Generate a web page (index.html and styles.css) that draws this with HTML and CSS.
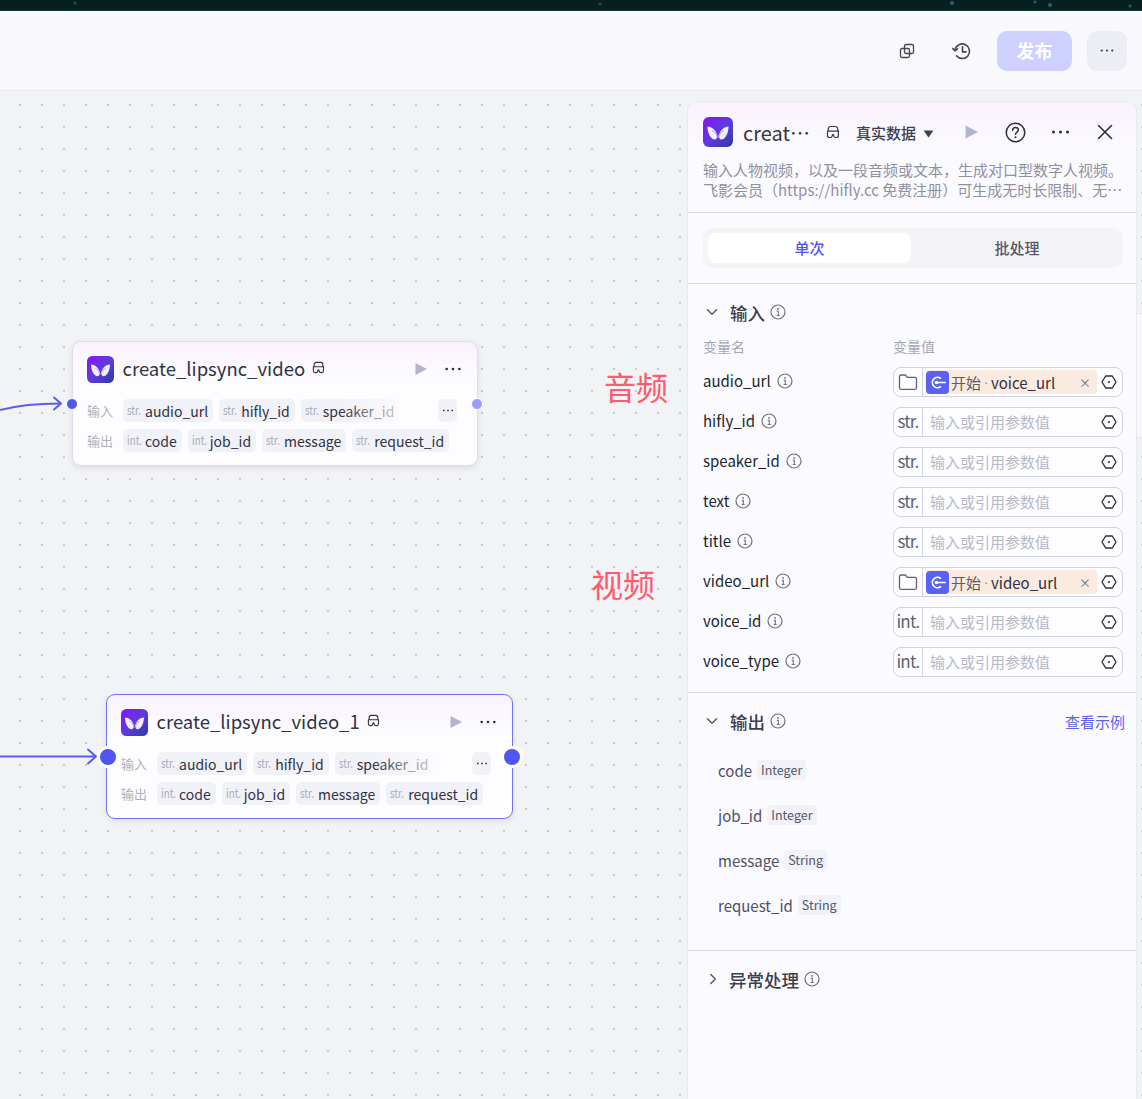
FILE: index.html
```html
<!DOCTYPE html>
<html lang="zh">
<head>
<meta charset="utf-8">
<title>create_lipsync_video</title>
<link rel="stylesheet" href="styles.css">
</head>
<body>
<svg class="defs" width="0" height="0" aria-hidden="true">
  <defs>
    <linearGradient id="logo-bg" x1="0" y1="0" x2="1" y2="1">
      <stop offset="0" stop-color="#8a14f2"/><stop offset=".5" stop-color="#5f3adf"/><stop offset="1" stop-color="#2a3ca4"/>
    </linearGradient>
    <symbol id="logo" viewBox="0 0 30 30">
      <rect width="30" height="30" rx="6" fill="url(#logo-bg)"/>
      <path d="M4.500 9.500c4.500.2 8 3 10 9.500-1 2.500-1.500 3.500-2.500 3.500-4.500 0-7.500-6.500-7.500-13z" fill="#fff" opacity=".92"/>
      <path d="M25.500 9.500c-4.500.2-8 3-10 9.500 1 2.500 1.500 3.500 2.500 3.500 4.500 0 7.500-6.500 7.500-13z" fill="#fff" opacity=".92"/>
      <path d="M9 13.500c2.500 1 4.500 3.500 5.500 7M21 13.500c-2.500 1-4.500 3.500-5.500 7" fill="none" stroke="#b79cf5" stroke-width="1"/>
    </symbol>
    <symbol id="mask" viewBox="0 0 14 14">
      <path d="M2.300 6V3.800C2.300 2.300 3.300 1.500 4.600 1.500h4.800c1.300 0 2.300.8 2.300 2.300V6M1 6.200h12M1.500 6.200v4.300c0 1.200.9 2 2 2h.8c1 0 1.700-.8 1.900-1.700l.3-1.300h.9l.3 1.300c.2.900.9 1.700 1.900 1.700h.8c1.100 0 2-.8 2-2V6.200" fill="none" stroke="currentColor" stroke-width="1.200" stroke-linejoin="round"/>
    </symbol>
    <symbol id="info" viewBox="0 0 16 16">
      <circle cx="8" cy="8" r="7" fill="none" stroke="currentColor" stroke-width="1.200"/>
      <path d="M6.700 7.200H8.300V11.500M6.700 11.500H9.700" fill="none" stroke="currentColor" stroke-width="1.100"/>
      <circle cx="8" cy="4.900" r=".9" fill="currentColor"/>
    </symbol>
    <symbol id="hex" viewBox="0 0 16 16">
      <path d="M4.700 2h6.600L15 8l-3.700 6H4.700L1 8z" fill="none" stroke="currentColor" stroke-width="1.400" stroke-linejoin="round"/>
      <circle cx="8" cy="8" r="1.100" fill="currentColor"/>
    </symbol>
    <symbol id="folder" viewBox="0 0 20 18">
      <path d="M1.500 3.500c0-.8.6-1.500 1.500-1.500h4.300l2 2.300H17c.8 0 1.500.7 1.500 1.500v9c0 .8-.7 1.500-1.500 1.500H3c-.9 0-1.500-.7-1.500-1.500z" fill="none" stroke="#5f6273" stroke-width="1.300" stroke-linejoin="round"/>
    </symbol>
    <symbol id="start" viewBox="0 0 23 23">
      <rect width="23" height="23" rx="4" fill="#5a62f6"/>
      <path d="M14.500 7.200a5.200 5.200 0 1 0 0 8.600" fill="none" stroke="#fff" stroke-width="1.700" stroke-linecap="round"/>
      <path d="M9.500 11.500H19" fill="none" stroke="#fff" stroke-width="1.700" stroke-linecap="round"/>
      <circle cx="10.500" cy="11.500" r="1.800" fill="#fff"/>
    </symbol>
    <symbol id="play" viewBox="0 0 14 14"><path d="M1.500 1v12L13 7z" fill="currentColor"/></symbol>
    <symbol id="dots" viewBox="0 0 20 4"><circle cx="3" cy="2" r="1.500" fill="currentColor"/><circle cx="10" cy="2" r="1.500" fill="currentColor"/><circle cx="17" cy="2" r="1.500" fill="currentColor"/></symbol>
    <symbol id="chev" viewBox="0 0 12 12"><path d="M1.500 3.800L6 8.300l4.500-4.500" fill="none" stroke="currentColor" stroke-width="1.500" stroke-linecap="round" stroke-linejoin="round"/></symbol>
  </defs>
</svg>

<div class="app">
  <div class="strip"></div>
  <header class="topbar">
    <svg class="tool-icon" viewBox="0 0 16 16" width="16" height="16"><rect x="5.500" y="1.500" width="9" height="9" rx="1.500" fill="none" stroke="currentColor" stroke-width="1.300"/><rect x="1.500" y="5.500" width="9" height="9" rx="1.500" fill="none" stroke="currentColor" stroke-width="1.300"/></svg>
    <svg class="tool-icon" viewBox="0 0 20 20" width="20" height="20"><path d="M3.200 8.200A7.300 7.300 0 1 1 4.500 14.800" fill="none" stroke="currentColor" stroke-width="1.600" stroke-linecap="round"/><path d="M.8 7.600l2.300 2.300 2.500-2.200" fill="none" stroke="currentColor" stroke-width="1.500" stroke-linecap="round" stroke-linejoin="round"/><path d="M10.500 5.800V10.800H14" fill="none" stroke="currentColor" stroke-width="1.700" stroke-linecap="round" stroke-linejoin="round"/></svg>
    <button class="publish">发布</button>
    <button class="more-btn"><svg viewBox="0 0 20 4" width="16" height="3"><use href="#dots"/></svg></button>
  </header>

  <main class="canvas">
    <svg class="edges" width="110" height="1008">
      <path d="M0 319C20 314 40 312.500 60 312.500" fill="none" stroke="#5a5ef0" stroke-width="2"/>
      <path d="M54 306.500l7 6-7 6" fill="none" stroke="#5a5ef0" stroke-width="2" stroke-linecap="round" stroke-linejoin="round"/>
      <path d="M0 665.500H95" fill="none" stroke="#5a5ef0" stroke-width="2"/>
      <path d="M88 658.500l8 7-8 7" fill="none" stroke="#5a5ef0" stroke-width="2" stroke-linecap="round" stroke-linejoin="round"/>
    </svg>

    <div class="note note-audio">音频</div>
    <div class="note note-video">视频</div>

    <article class="node node-first">
      <span class="port port-in"></span><span class="port port-out"></span>
      <div class="node-head">
        <svg class="node-logo"><use href="#logo"/></svg>
        <span class="node-title">create_lipsync_video</span>
        <svg class="node-mask"><use href="#mask"/></svg>
        <svg class="node-play"><use href="#play"/></svg>
        <svg class="node-dots"><use href="#dots"/></svg>
      </div>
      <div class="node-row">
        <span class="row-label">输入</span>
        <div class="pills pills-input">
          <span class="pill"><i>str.</i>audio_url</span>
          <span class="pill"><i>str.</i>hifly_id</span>
          <span class="pill"><i>str.</i>speaker_id</span>
          <span class="fade"></span>
        </div>
        <span class="pill-more"><svg viewBox="0 0 20 4" width="12" height="3"><use href="#dots"/></svg></span>
      </div>
      <div class="node-row">
        <span class="row-label">输出</span>
        <div class="pills">
          <span class="pill"><i>int.</i>code</span>
          <span class="pill"><i>int.</i>job_id</span>
          <span class="pill"><i>str.</i>message</span>
          <span class="pill"><i>str.</i>request_id</span>
        </div>
      </div>
    </article>

    <article class="node node-second">
      <span class="port port-in"></span><span class="port port-out"></span>
      <div class="node-head">
        <svg class="node-logo"><use href="#logo"/></svg>
        <span class="node-title">create_lipsync_video_1</span>
        <svg class="node-mask"><use href="#mask"/></svg>
        <svg class="node-play"><use href="#play"/></svg>
        <svg class="node-dots"><use href="#dots"/></svg>
      </div>
      <div class="node-row">
        <span class="row-label">输入</span>
        <div class="pills pills-input">
          <span class="pill"><i>str.</i>audio_url</span>
          <span class="pill"><i>str.</i>hifly_id</span>
          <span class="pill"><i>str.</i>speaker_id</span>
          <span class="fade"></span>
        </div>
        <span class="pill-more"><svg viewBox="0 0 20 4" width="12" height="3"><use href="#dots"/></svg></span>
      </div>
      <div class="node-row">
        <span class="row-label">输出</span>
        <div class="pills">
          <span class="pill"><i>int.</i>code</span>
          <span class="pill"><i>int.</i>job_id</span>
          <span class="pill"><i>str.</i>message</span>
          <span class="pill"><i>str.</i>request_id</span>
        </div>
      </div>
    </article>

    <div class="behind-panel"></div>

    <aside class="panel">
      <section class="panel-head">
        <div class="head-row">
          <svg class="panel-logo"><use href="#logo"/></svg>
          <span class="panel-title">creat⋯</span>
          <svg class="panel-mask"><use href="#mask"/></svg>
          <span class="data-select">真实数据<svg class="caret" viewBox="0 0 12 9" width="11" height="8"><path d="M0.500 0.500h11L6 8.500z" fill="currentColor"/></svg></span>
          <svg class="panel-play"><use href="#play"/></svg>
          <svg class="panel-help" viewBox="0 0 22 22"><circle cx="11" cy="11" r="9.700" fill="none" stroke="currentColor" stroke-width="1.600"/><path d="M8 8.600c0-1.800 1.300-2.900 3-2.900s3 1.100 3 2.600c0 2.200-3 2.300-3 4.600" fill="none" stroke="currentColor" stroke-width="1.600" stroke-linecap="round"/><circle cx="11" cy="16" r="1.100" fill="currentColor"/></svg>
          <svg class="panel-dots"><use href="#dots"/></svg>
          <svg class="panel-close" viewBox="0 0 16 16"><path d="M1.500 1.500l13 13M14.500 1.500l-13 13" fill="none" stroke="currentColor" stroke-width="1.600" stroke-linecap="round"/></svg>
        </div>
        <p class="desc">输入人物视频，以及一段音频或文本，生成对口型数字人视频。<br>飞影会员（https://hifly.cc 免费注册）可生成无时长限制、无⋯</p>
      </section>

      <section class="tabs-wrap">
        <div class="tabs">
          <span class="tab tab-active">单次</span>
          <span class="tab">批处理</span>
        </div>
      </section>

      <section class="sec sec-input">
        <div class="sec-title">
          <svg class="chev"><use href="#chev"/></svg><span>输入</span><svg class="info"><use href="#info"/></svg>
        </div>
        <div class="col-head"><span>变量名</span><span>变量值</span></div>

        <div class="var-row">
          <div class="var-name">audio_url<svg class="info"><use href="#info"/></svg></div>
          <div class="field">
            <span class="field-type"><svg class="folder"><use href="#folder"/></svg></span>
            <span class="ref"><svg class="start"><use href="#start"/></svg><em>开始</em><b>·</b><span>voice_url</span><span class="ref-x">×</span></span>
            <svg class="hex"><use href="#hex"/></svg>
          </div>
        </div>
        <div class="var-row">
          <div class="var-name">hifly_id<svg class="info"><use href="#info"/></svg></div>
          <div class="field"><span class="field-type">str.</span><span class="ph">输入或引用参数值</span><svg class="hex"><use href="#hex"/></svg></div>
        </div>
        <div class="var-row">
          <div class="var-name">speaker_id<svg class="info"><use href="#info"/></svg></div>
          <div class="field"><span class="field-type">str.</span><span class="ph">输入或引用参数值</span><svg class="hex"><use href="#hex"/></svg></div>
        </div>
        <div class="var-row">
          <div class="var-name">text<svg class="info"><use href="#info"/></svg></div>
          <div class="field"><span class="field-type">str.</span><span class="ph">输入或引用参数值</span><svg class="hex"><use href="#hex"/></svg></div>
        </div>
        <div class="var-row">
          <div class="var-name">title<svg class="info"><use href="#info"/></svg></div>
          <div class="field"><span class="field-type">str.</span><span class="ph">输入或引用参数值</span><svg class="hex"><use href="#hex"/></svg></div>
        </div>
        <div class="var-row">
          <div class="var-name">video_url<svg class="info"><use href="#info"/></svg></div>
          <div class="field">
            <span class="field-type"><svg class="folder"><use href="#folder"/></svg></span>
            <span class="ref"><svg class="start"><use href="#start"/></svg><em>开始</em><b>·</b><span>video_url</span><span class="ref-x">×</span></span>
            <svg class="hex"><use href="#hex"/></svg>
          </div>
        </div>
        <div class="var-row">
          <div class="var-name">voice_id<svg class="info"><use href="#info"/></svg></div>
          <div class="field"><span class="field-type">int.</span><span class="ph">输入或引用参数值</span><svg class="hex"><use href="#hex"/></svg></div>
        </div>
        <div class="var-row">
          <div class="var-name">voice_type<svg class="info"><use href="#info"/></svg></div>
          <div class="field"><span class="field-type">int.</span><span class="ph">输入或引用参数值</span><svg class="hex"><use href="#hex"/></svg></div>
        </div>
      </section>

      <section class="sec sec-output">
        <div class="sec-title">
          <svg class="chev"><use href="#chev"/></svg><span>输出</span><svg class="info"><use href="#info"/></svg>
          <a class="example">查看示例</a>
        </div>
        <ul class="outs">
          <li><span>code</span><span class="type">Integer</span></li>
          <li><span>job_id</span><span class="type">Integer</span></li>
          <li><span>message</span><span class="type">String</span></li>
          <li><span>request_id</span><span class="type">String</span></li>
        </ul>
      </section>

      <section class="sec sec-error">
        <div class="sec-title">
          <svg class="chev chev-right"><use href="#chev"/></svg><span>异常处理</span><svg class="info"><use href="#info"/></svg>
        </div>
      </section>
    </aside>
  </main>
</div>
</body>
</html>
```

FILE: styles.css
```css
* { box-sizing: border-box; }
html, body { margin: 0; padding: 0; height: 100%; overflow: hidden; }
body {
  font-family: "Noto Sans CJK SC", "Noto Sans", sans-serif;
  color: #1d1f2b;
  background: #f2f3f5;
}
.defs { position: absolute; }
.app { display: flex; flex-direction: column; height: 1099px; }

.strip {
  height: 11px;
  flex: none;
  border-bottom: 1px solid #123a3a;
  background:
    radial-gradient(circle at 75px 3px, #1f5050 0 1px, transparent 2px),
    radial-gradient(circle at 952px 3px, #2b5c60 0 1.500px, transparent 2.500px),
    radial-gradient(circle at 1050px 5px, #2b5c60 0 1.500px, transparent 2.500px),
    radial-gradient(circle at 1035px 2px, #2b5c60 0 1px, transparent 2px),
    radial-gradient(circle at 1130px 6px, #2b5c60 0 1px, transparent 2px),
    radial-gradient(circle at 600px 4px, #1f4a4a 0 1px, transparent 2px),
    #081f22;
}

.topbar {
  height: 80px;
  flex: none;
  display: flex;
  align-items: center;
  justify-content: flex-end;
  padding: 0 15px 0 0;
  background: #f9f8fd;
  border-bottom: 1px solid #e6e6f1;
  color: #44465a;
}
.tool-icon { flex: none; }
.tool-icon:nth-child(1) { margin-right: 37px; }
.tool-icon:nth-child(2) { margin-right: 25px; }
.publish, .more-btn {
  border: 0;
  height: 40px;
  border-radius: 10px;
  font-family: inherit;
  padding: 0;
}
.publish { width: 75px; padding-bottom: 2px; background: #ced0fd; color: #fff; font-size: 18px; font-weight: 700; }
.more-btn { width: 40px; margin-left: 15px; background: #ededf6; color: #44465a; display: flex; align-items: center; justify-content: center; }

.canvas {
  position: relative;
  flex: 1;
  overflow: hidden;
  background-color: #f2f3f5;
  background-image: radial-gradient(circle at 11px 11px, #cbccd2 0 1px, transparent 1.600px);
  background-size: 22px 22px;
  background-position: 9px 3px;
}
.edges { position: absolute; left: 0; top: 0; z-index: 3; }

.note { position: absolute; font-size: 32px; line-height: 44px; color: #ff5a6e; }
.note-audio { left: 604px; top: 273px; }
.note-video { left: 591px; top: 470px; }

.node {
  position: absolute;
  border-radius: 9px;
  padding: 13px 14px 0;
  background: linear-gradient(180deg, #f9f2fe 0, #fdfcff 40px, #fdfdff 100%);
  border: 1px solid #dcdded;
  box-shadow: 0 2px 6px rgba(40, 40, 80, .1);
}
.node-first { left: 72px; top: 250px; width: 406px; height: 125px; }
.node-second { left: 106px; top: 603px; width: 407px; height: 125px; border-color: #7271f5; }

.node-head { display: flex; align-items: center; height: 28px; margin-bottom: 16px; }
.node-logo { width: 27px; height: 27px; flex: none; }
.node-title { font-size: 18.500px; line-height: 28px; margin-left: 8.500px; margin-top: -2px; color: #303341; white-space: nowrap; }
.node-mask { width: 13px; height: 13px; margin-left: 7px; margin-top: -3px; color: #303341; flex: none; }
.node-play { width: 14px; height: 14px; margin-left: auto; color: #b1b4cd; flex: none; }
.node-dots { width: 18px; height: 4px; margin-left: 16px; margin-right: 1px; color: #303341; flex: none; }

.node-row { display: flex; align-items: center; height: 23px; margin-bottom: 7px; position: relative; }
.row-label { width: 36px; font-size: 13px; color: #aeb0bf; flex: none; }
.pills { display: flex; gap: 6px; position: relative; flex: none; }
.pills-input { width: 313px; }
.pill {
  display: inline-flex;
  align-items: center;
  height: 23px;
  padding: 0 5px 0 4px;
  border-radius: 5px;
  background: #f1f1f8;
  font-size: 14px;
  color: #303341;
  white-space: nowrap;
  flex: none;
}
.pill i {
  display: inline-block;
  width: 15px;
  font-style: normal;
  font-size: 13px;
  color: #a9acbd;
  margin-right: 3px;
  margin-top: -2px;
  transform: scaleX(.75);
  transform-origin: left center;
}
.fade { position: absolute; right: 0; top: 0; bottom: 0; width: 95px; background: linear-gradient(90deg, rgba(253,253,255,0), #fdfdff 80%); }
.pill-more {
  width: 19px; height: 23px; border-radius: 5px; background: #f1f1f8; color: #303341;
  display: flex; align-items: center; justify-content: center; flex: none; margin-left: 2px;
}

.port { position: absolute; border-radius: 50%; z-index: 4; }
.node-first .port { width: 12px; height: 12px; top: 56px; background: #4f55ee; border: 1.500px solid #fff; }
.node-first .port-in { left: -7px; }
.node-first .port-out { right: -6px; background: #9a9dfa; }
.node-second .port { width: 22px; height: 22px; top: 51px; background: #4f55ee; border: 3px solid #fff; }
.node-second .port-in { left: -10px; }
.node-second .port-out { right: -11px; }

.behind-panel {
  position: absolute; right: 0; top: 222px; width: 6px; height: 125px;
  background: #f8f8fd; border-top: 1px solid #e6e6f1; border-bottom: 1px solid #e6e6f1;
}

.panel {
  position: absolute;
  left: 687px; top: 10px; width: 450px; bottom: -12px;
  display: flex; flex-direction: column;
  background: #fbfbff;
  border: 1px solid #e8e9f2;
  border-radius: 10px 10px 0 0;
}
.panel-head {
  flex: none;
  height: 111px;
  padding: 14px 13px 0 15px;
  background: linear-gradient(180deg, #f9f2fe 0, #fbfaff 50px, #fbfbff 100%);
  border-radius: 10px 10px 0 0;
  border-bottom: 1px solid #d4d6e6;
}
.head-row { display: flex; align-items: center; height: 32px; color: #303341; }
.panel-logo { width: 30px; height: 30px; flex: none; }
.panel-title { font-size: 20px; margin-left: 10px; color: #33353f; width: 68px; white-space: nowrap; }
.panel-mask { width: 14px; height: 14px; margin-left: 15px; flex: none; color: #3a3c4c; }
.data-select { display: flex; align-items: center; margin-left: 16px; font-size: 15px; font-weight: 500; color: #3d3f4e; white-space: nowrap; }
.caret { margin-left: 7px; margin-top: 3px; color: #3d3f4e; }
.panel-play { width: 15px; height: 16px; margin-left: 30px; color: #b1b4cd; flex: none; }
.panel-help { width: 21px; height: 21px; margin-left: 26px; flex: none; color: #2c2e3b; }
.panel-dots { width: 21px; height: 4px; margin-left: 24px; color: #2c2e3b; flex: none; }
.panel-close { width: 16px; height: 16px; margin-left: 26px; flex: none; color: #2c2e3b; }
.desc { margin: 12px 0 0; font-size: 15px; line-height: 20px; color: #8f919f; white-space: nowrap; }

.tabs-wrap { flex: none; height: 71px; padding: 15px 13px 0 15px; border-bottom: 1px solid #d4d6e6; }
.tabs { display: flex; height: 40px; padding: 5px 0 5px 5px; border-radius: 10px; background: #f4f4f6; }
.tab { flex: 1; display: flex; align-items: center; justify-content: center; padding-bottom: 2px; font-size: 15px; font-weight: 500; color: #55586a; border-radius: 8px; }
.tab-active { background: #fff; color: #4e55f0; flex: none; width: 203px; }

.sec { flex: none; padding: 0 13px 0 15px; border-bottom: 1px solid #d4d6e6; }
.sec-input { height: 409px; padding-top: 16px; }
.sec-output { height: 258px; padding-top: 16px; }
.sec-error { border-bottom: 0; padding-top: 16px; }

.sec-title { display: flex; align-items: center; height: 24px; font-size: 17.500px; font-weight: 500; color: #3d3f4e; }
.chev { width: 12px; height: 12px; color: #5a5d6e; margin-left: 3px; margin-right: 12px; flex: none; }
.chev-right { transform: rotate(-90deg); margin-left: 4px; margin-right: 10px; }
.info { width: 16px; height: 16px; color: #6c6f80; margin-left: 6px; flex: none; }
.sec-title .info { margin-left: 5px; }
.example { margin-left: auto; margin-right: -2px; font-size: 15px; font-weight: 400; color: #5b63f0; }

.col-head { display: flex; height: 20px; margin-top: 12px; margin-bottom: 11px; font-size: 14px; line-height: 20px; color: #a5a7b4; }
.col-head span:first-child { width: 190px; }

.var-row { display: flex; align-items: center; height: 30px; margin-bottom: 10px; }
.var-name { width: 190px; flex: none; display: flex; align-items: center; font-size: 15px; color: #1d1f2b; margin-top: -3px; }
.field {
  width: 230px; height: 30px; flex: none;
  display: flex; align-items: center;
  border: 1px solid #cfd1e4; border-radius: 8px; background: #fdfdff;
}
.field-type {
  width: 29px; height: 100%; flex: none;
  display: flex; align-items: center; justify-content: center;
  padding-bottom: 3px;
  border-right: 1px solid #cfd1e4;
  font-size: 17px; letter-spacing: -.8px; color: #5f6273;
}
.field-type .folder { margin-top: 3px; }
.folder { width: 20px; height: 18px; }
.ph { flex: 1; padding: 0 0 2px 7px; font-size: 15px; color: #b7b9c6; white-space: nowrap; }
.hex { width: 16px; height: 16px; color: #2c2e3b; flex: none; margin-right: 5px; margin-left: 4px; }
.ref {
  flex: 1; height: 24px; margin-left: 3px;
  display: flex; align-items: center;
  background: #faeae0; border-radius: 4px;
  font-size: 15px; color: #2f3140; white-space: nowrap;
}
.start { width: 23px; height: 23px; flex: none; }
.ref em { font-style: normal; color: #5a5c68; margin-left: 2px; }
.ref b { display: inline-block; width: 10px; text-align: center; font-family: "Liberation Sans", sans-serif; font-weight: 400; color: #8d8f9c; font-size: 14px; }
.ref-x { margin-left: auto; margin-right: 6px; color: #6d6f7d; font-size: 12px; }

.outs { list-style: none; margin: 15px 0 0; padding: 0 0 0 15px; }
.outs li { display: flex; align-items: center; height: 45px; font-size: 15px; line-height: 24px; color: #4c4f5f; }
.type {
  margin-left: 5px; margin-top: -2px; height: 20px; padding: 0 4px; border-radius: 4px;
  background: #f1f1f8; font-size: 12.500px; line-height: 20px; color: #54576a;
}
```
